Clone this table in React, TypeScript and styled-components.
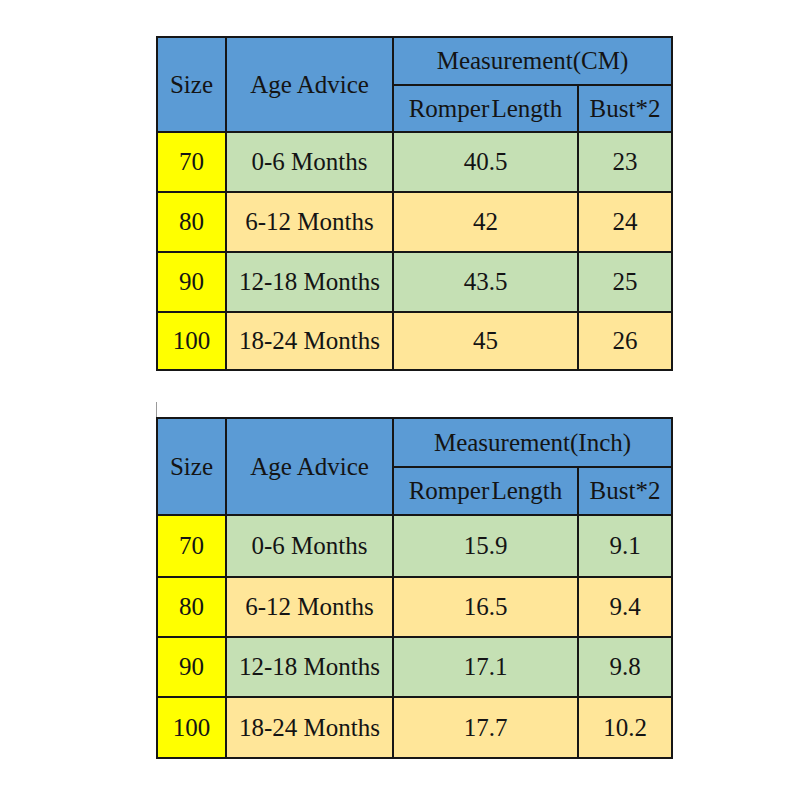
import styled, { createGlobalStyle } from "styled-components";

const GlobalStyle = createGlobalStyle`
  html, body {
    margin: 0;
    padding: 0;
    background: #fff;
  }
`;

const Page = styled.div`
  display: flex;
  flex-direction: column;
  align-items: flex-start;
  padding: 36px 0 0 156px;
`;

const Caret = styled.div`
  width: 1px;
  height: 15px;
  background: #9a9a9a;
  margin-top: 31px;
`;

const Table = styled.table`
  border-collapse: collapse;
  table-layout: fixed;
  width: 515px;
  font-family: "Liberation Serif", "Times New Roman", serif;
  font-size: 25px;
  color: #141414;
  text-align: center;
  td,
  th {
    border: 2px solid #161616;
    padding: 0;
    font-family: inherit;
    font-size: inherit;
    font-weight: normal;
    white-space: nowrap;
  }
`;

const HeadRow = styled.tr<{ $h: number }>`
  height: ${(p) => p.$h}px;
  background: #5b9bd5;
`;

const DataRow = styled.tr<{ $h: number; $tone: "green" | "orange" }>`
  height: ${(p) => p.$h}px;
  background: ${(p) => (p.$tone === "green" ? "#c5e0b4" : "#ffe699")};
`;

const SizeCell = styled.td`
  background: #ffff00;
`;

const Tight = styled.span`
  word-spacing: -4px;
`;

type Row = { size: string; age: string; length: string; bust: string };

const CM_ROWS: Row[] = [
  { size: "70", age: "0-6 Months", length: "40.5", bust: "23" },
  { size: "80", age: "6-12 Months", length: "42", bust: "24" },
  { size: "90", age: "12-18 Months", length: "43.5", bust: "25" },
  { size: "100", age: "18-24 Months", length: "45", bust: "26" },
];

const INCH_ROWS: Row[] = [
  { size: "70", age: "0-6 Months", length: "15.9", bust: "9.1" },
  { size: "80", age: "6-12 Months", length: "16.5", bust: "9.4" },
  { size: "90", age: "12-18 Months", length: "17.1", bust: "9.8" },
  { size: "100", age: "18-24 Months", length: "17.7", bust: "10.2" },
];

type SizeTableProps = {
  unit: string;
  rows: Row[];
  head: [number, number];
  rowH: number[];
};

const SizeTable = ({ unit, rows, head, rowH }: SizeTableProps) => (
  <Table>
    <colgroup>
      <col style={{ width: 69 }} />
      <col style={{ width: 167 }} />
      <col style={{ width: 185 }} />
      <col style={{ width: 94 }} />
    </colgroup>
    <thead>
      <HeadRow $h={head[0]}>
        <th rowSpan={2}>Size</th>
        <th rowSpan={2}>Age Advice</th>
        <th colSpan={2}>Measurement({unit})</th>
      </HeadRow>
      <HeadRow $h={head[1]}>
        <th>
          <Tight>Romper Length</Tight>
        </th>
        <th>Bust*2</th>
      </HeadRow>
    </thead>
    <tbody>
      {rows.map((r, i) => (
        <DataRow key={r.size} $h={rowH[i]} $tone={i % 2 === 0 ? "green" : "orange"}>
          <SizeCell>{r.size}</SizeCell>
          <td>{r.age}</td>
          <td>{r.length}</td>
          <td>{r.bust}</td>
        </DataRow>
      ))}
    </tbody>
  </Table>
);

export default function App() {
  return (
    <>
      <GlobalStyle />
      <Page>
        <SizeTable unit="CM" rows={CM_ROWS} head={[48, 47]} rowH={[60, 60, 60, 58]} />
        <Caret />
        <SizeTable unit="Inch" rows={INCH_ROWS} head={[49, 48]} rowH={[62, 60, 60, 61]} />
      </Page>
    </>
  );
}
